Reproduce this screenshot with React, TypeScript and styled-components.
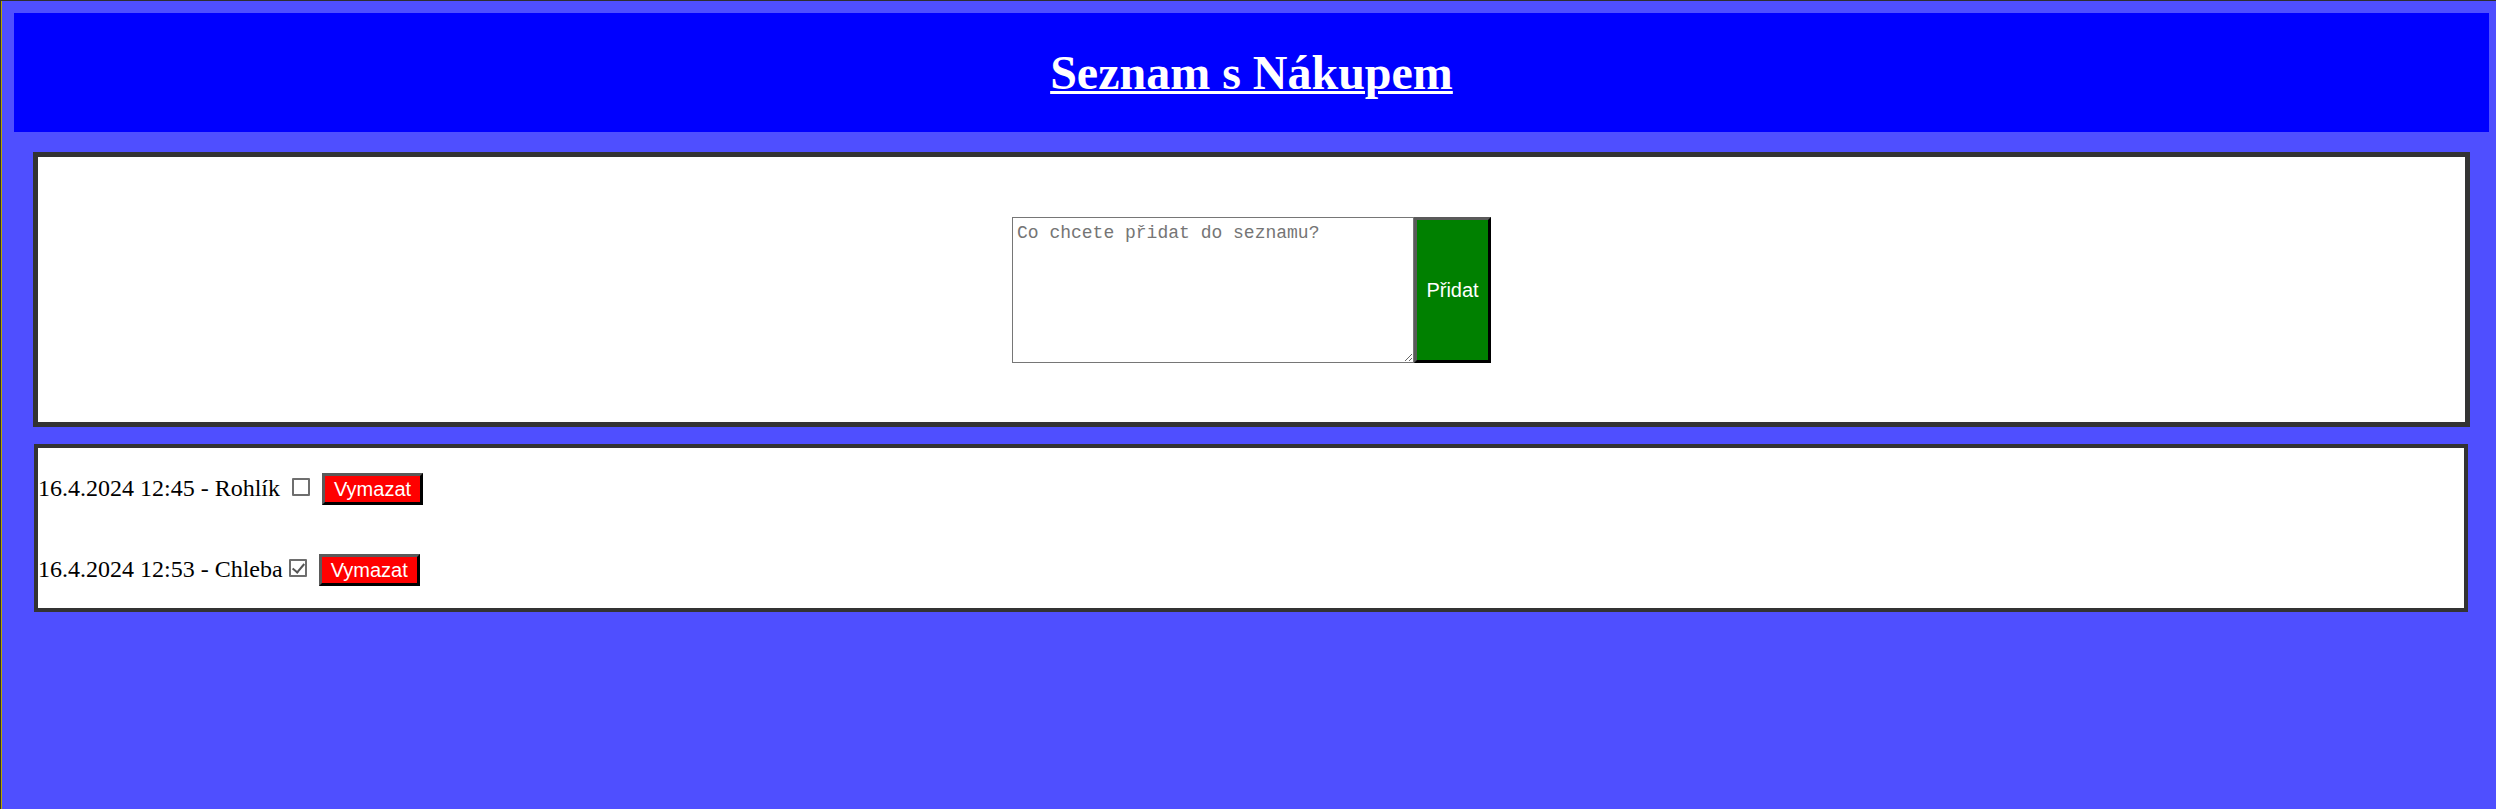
import { useState } from "react";
import styled, { createGlobalStyle } from "styled-components";

const GlobalStyle = createGlobalStyle`
  html {
    background: #ffffff;
  }
  body {
    margin: 0;
  }
  * {
    box-sizing: border-box;
  }
`;

const Page = styled.div`
  min-height: 100vh;
  margin-right: 3px;
  padding: 12px 7px 0 13px;
  background: #4f4fff;
  border-top: 1px solid #2e2e2e;
  border-left: 1px solid #2e2e2e;
  box-shadow: inset 1px 0 0 #b9a700;
  font-family: "Liberation Serif", "Times New Roman", serif;
`;

const Header = styled.header`
  background: #0000ff;
  padding: 32px 0;
  text-align: center;
`;

const Title = styled.h1`
  margin: 0;
  font-size: 48px;
  line-height: 55px;
  font-weight: bold;
  color: #ffffff;
  text-decoration: underline;
  text-decoration-thickness: 3px;
`;

const Card = styled.section<{ $border: number; $left: number; $right: number; $top: number }>`
  margin: ${(p) => p.$top}px ${(p) => p.$right}px 0 ${(p) => p.$left}px;
  background: #ffffff;
  border: ${(p) => p.$border}px solid #333333;
`;

const Form = styled.div`
  display: flex;
  justify-content: center;
  padding: 60px 0 59px;
`;

const Input = styled.textarea`
  width: 402px;
  height: 146px;
  margin: 0;
  padding: 5px 3px 3px 4px;
  border: 1px solid #767676;
  font-family: "Liberation Mono", "DejaVu Sans Mono", monospace;
  font-size: 18px;
  color: #000;
  &::placeholder {
    color: #757575;
  }
`;

const Button = styled.button<{ $bg: string }>`
  margin: 0;
  background: ${(p) => p.$bg};
  color: #ffffff;
  font-family: "Liberation Sans", Arial, sans-serif;
  font-size: 20px;
  border-style: solid;
  border-width: 3px;
  border-color: #5a5a5a #000000 #000000 #5a5a5a;
  cursor: pointer;
`;

const AddButton = styled(Button)`
  width: 77px;
  height: 146px;
  padding: 0;
`;

const DeleteButton = styled(Button)`
  height: 32px;
  padding: 1px 9px;
  line-height: 23px;
`;

const List = styled.div`
  display: flex;
  flex-direction: column;
  gap: 49px;
  padding: 25px 0 22px;
`;

const Row = styled.div`
  display: flex;
  align-items: baseline;
  height: 32px;
`;

const Label = styled.span`
  font-size: 24px;
  white-space: pre;
  color: #000;
`;

const Check = styled.input`
  appearance: none;
  position: relative;
  width: 18px;
  height: 18px;
  margin: 0 12px 2px 6px;
  border: 2px solid #6e6e6e;
  border-radius: 1px;
  background: #ffffff;
  &:checked::after {
    content: "";
    position: absolute;
    left: 4px;
    top: 0px;
    width: 5px;
    height: 10px;
    border-right: 2px solid #555;
    border-bottom: 2px solid #555;
    transform: rotate(40deg);
  }
`;

type Item = { id: number; date: string; name: string; done: boolean };

export default function App() {
  const [items, setItems] = useState<Item[]>([
    { id: 1, date: "16.4.2024 12:45", name: "Rohlík ", done: false },
    { id: 2, date: "16.4.2024 12:53", name: "Chleba", done: true },
  ]);

  return (
    <>
      <GlobalStyle />
      <Page>
        <Header>
          <Title>Seznam s Nákupem</Title>
        </Header>
        <Card $border={5} $top={20} $left={19} $right={19}>
          <Form>
            <Input placeholder="Co chcete přidat do seznamu?" />
            <AddButton $bg="#008000">Přidat</AddButton>
          </Form>
        </Card>
        <Card $border={4} $top={17} $left={20} $right={21}>
          <List>
            {items.map((item) => (
              <Row key={item.id}>
                <Label>
                  {item.date} - {item.name}
                </Label>
                <Check
                  type="checkbox"
                  checked={item.done}
                  onChange={() =>
                    setItems(items.map((i) => (i.id === item.id ? { ...i, done: !i.done } : i)))
                  }
                />
                <DeleteButton
                  $bg="#ff0000"
                  onClick={() => setItems(items.filter((i) => i.id !== item.id))}
                >
                  Vymazat
                </DeleteButton>
              </Row>
            ))}
          </List>
        </Card>
      </Page>
    </>
  );
}
